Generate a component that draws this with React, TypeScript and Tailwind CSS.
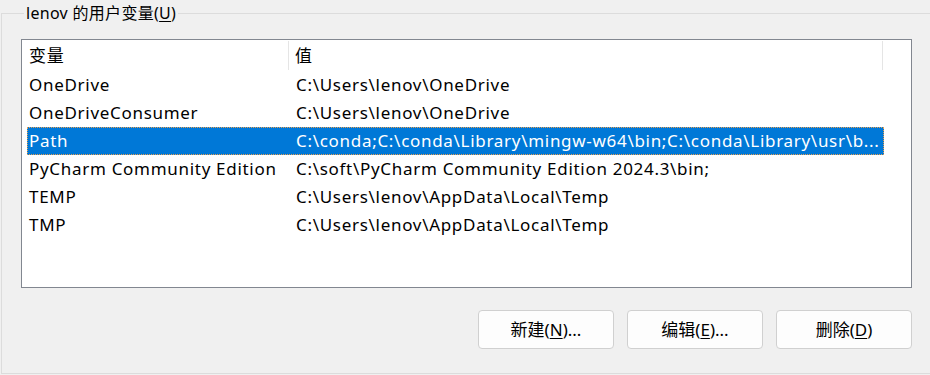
const font = { fontFamily: '"Noto Sans", "Noto Sans CJK SC", sans-serif' };

type Row = { name: string; value: string };

const rows: Row[] = [
  { name: "OneDrive", value: "C:\\Users\\lenov\\OneDrive" },
  { name: "OneDriveConsumer", value: "C:\\Users\\lenov\\OneDrive" },
  {
    name: "Path",
    value: "C:\\conda;C:\\conda\\Library\\mingw-w64\\bin;C:\\conda\\Library\\usr\\b...",
  },
  {
    name: "PyCharm Community Edition",
    value: "C:\\soft\\PyCharm Community Edition 2024.3\\bin;",
  },
  { name: "TEMP", value: "C:\\Users\\lenov\\AppData\\Local\\Temp" },
  { name: "TMP", value: "C:\\Users\\lenov\\AppData\\Local\\Temp" },
];

const selected = 2;

function Button({ label, hotkey, rest }: { label: string; hotkey: string; rest: string }) {
  return (
    <button className="w-[136px] h-[39px] rounded-[4px] border border-[#d0d0d0] bg-[#fdfdfd] text-[17px] text-black flex items-center justify-center">
      {label}(<span className="underline underline-offset-2">{hotkey}</span>){rest}
    </button>
  );
}

export default function App() {
  return (
    <div
      className="w-[930px] h-[375px] overflow-hidden bg-[#f0f0f0] text-black"
      style={font}
    >
      <fieldset className="ml-[1px] w-[980px] h-[374px] border border-[#dcdcdc] pl-[19px]">
        <legend className="ml-[3px] px-[2px] text-[16px] leading-[26px] tracking-[0.3px]">
          lenov 的用户变量(<span className="underline underline-offset-2">U</span>)
        </legend>

        <div className="mt-[13px] w-[891px] h-[249px] border border-[#828790] bg-white text-[17px] tracking-[0.7px]">
          {/* header */}
          <div className="flex h-[31px]">
            <div className="w-[267px] pl-[7px] flex items-center border-r border-[#e5e5e5] my-[1px]">
              变量
            </div>
            <div className="w-[594px] pl-[6px] flex items-center border-r border-[#e5e5e5] my-[1px]">
              值
            </div>
          </div>

          {/* rows */}
          <div className="flex flex-col ml-[5px] w-[857px]">
            {rows.map((r, i) => (
              <div
                key={r.name}
                className={
                  i === selected
                    ? "flex h-[28px] items-center bg-[#0078d7] text-white outline outline-1 outline-dotted outline-[#e8a050] -outline-offset-1"
                    : "flex h-[28px] items-center"
                }
              >
                <div className="w-[262px] pl-[2px] whitespace-nowrap overflow-hidden">{r.name}</div>
                <div className="flex-1 pl-[7px] whitespace-nowrap overflow-hidden">{r.value}</div>
              </div>
            ))}
          </div>
        </div>

        <div className="w-[891px] flex justify-end gap-[13px] mt-[22px]">
          <Button label="新建" hotkey="N" rest="..." />
          <Button label="编辑" hotkey="E" rest="..." />
          <Button label="删除" hotkey="D" rest="" />
        </div>
      </fieldset>
    </div>
  );
}
